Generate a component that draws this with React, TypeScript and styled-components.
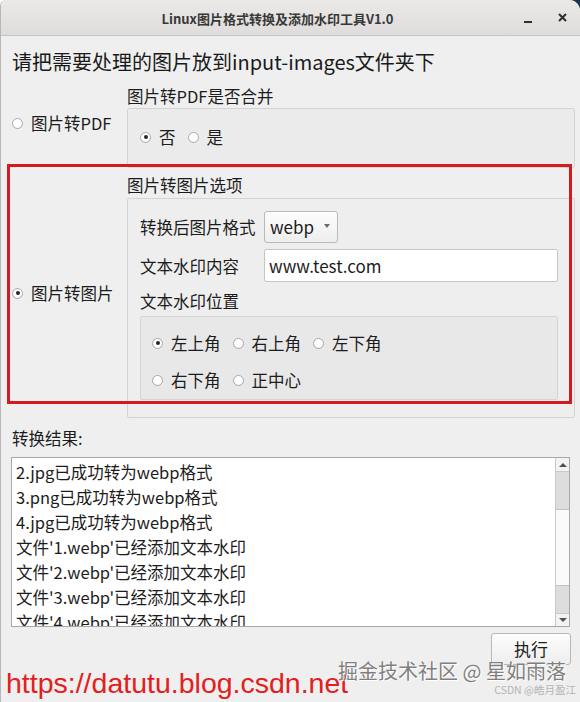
import React from "react";
import styled, { createGlobalStyle } from "styled-components";

const GlobalStyle = createGlobalStyle`
  html, body {
    margin: 0;
    padding: 0;
    background: #ffffff;
  }
  body {
    font-family: "Noto Sans CJK SC", "Noto Sans", sans-serif;
    color: #1c1c1c;
  }
  * {
    box-sizing: border-box;
  }
`;

const Page = styled.div`
  position: relative;
  width: 580px;
  height: 702px;
  overflow: hidden;
`;

const DesktopCorner = styled.div`
  position: absolute;
  top: 0;
  right: 0;
  width: 14px;
  height: 14px;
  background: #1d3552;
`;

const Window = styled.div`
  position: relative;
  width: 580px;
  height: 702px;
  background: #efefef;
  border-left: 1px solid #b7b7b7;
  border-top-left-radius: 6px;
  border-top-right-radius: 11px;
  overflow: hidden;
`;

const TitleBar = styled.div`
  height: 36px;
  display: grid;
  grid-template-columns: 1fr auto 1fr;
  align-items: center;
  background: linear-gradient(#ebe9e7, #dfdddb);
  border-bottom: 1px solid #c6c4c1;
`;

const Title = styled.div`
  grid-column: 2;
  margin-right: 26px;
  font-size: 13px;
  font-weight: 700;
  color: #383838;
  padding-top: 1px;
`;

const Controls = styled.div`
  justify-self: end;
  display: flex;
  align-items: center;
  gap: 26px;
  padding-right: 13px;
`;

const Minimize = styled.span`
  display: block;
  width: 8px;
  height: 2px;
  margin-top: 9px;
  background: #2f2f2f;
`;

const Body = styled.div`
  padding: 0 5px 0 11px;
`;

const Heading = styled.div`
  margin-top: 12px;
  font-size: 20px;
  line-height: 28px;
  color: #1a1a1a;
`;

const OptionRow = styled.div<{ $top: number }>`
  display: grid;
  grid-template-columns: 115px 1fr;
  margin-top: ${(p) => p.$top}px;
`;

const ModeCell = styled.div<{ $lift: number }>`
  display: flex;
  align-items: center;
  padding-bottom: ${(p) => p.$lift}px;
`;

const GroupLabel = styled.div<{ $top?: number }>`
  font-size: 16.5px;
  line-height: 24px;
  margin-top: ${(p) => p.$top ?? 0}px;
`;

const Frame = styled.div<{ $shade: string }>`
  border: 1px solid #d4d4d4;
  border-radius: 2px;
  background: ${(p) => p.$shade};
`;

const MergeFrame = styled(Frame)`
  height: 60px;
  display: flex;
  align-items: center;
  gap: 12px;
  padding: 0 0 2px 12px;
`;

const ImageFrame = styled(Frame)`
  padding: 12px 16px 17px 12px;
  margin-top: 1px;
`;

const FieldRow = styled.div<{ $top?: number }>`
  display: flex;
  align-items: center;
  margin-top: ${(p) => p.$top ?? 0}px;
`;

const FieldLabel = styled.div`
  width: 124px;
  font-size: 16.5px;
  line-height: 24px;
`;

const Select = styled.div`
  width: 74px;
  height: 32px;
  display: flex;
  align-items: center;
  justify-content: space-between;
  padding: 0 7px 1px 5px;
  border: 1px solid #b9b9b9;
  border-radius: 3px;
  background: linear-gradient(#fdfdfd, #eeeeee);
  font-size: 17px;
`;

const Caret = styled.span`
  width: 0;
  height: 0;
  border-left: 3.5px solid transparent;
  border-right: 3.5px solid transparent;
  border-top: 4px solid #6a6a6a;
  margin-bottom: 2px;
`;

const Entry = styled.div`
  flex: 1;
  height: 33px;
  display: flex;
  align-items: center;
  padding: 0 0 1px 4px;
  background: #ffffff;
  border: 1px solid #c6c6c6;
  border-radius: 2px;
  font-size: 17px;
`;

const PositionFrame = styled(Frame)`
  margin-top: 3px;
  padding: 14px 10px 7px 11px;
  display: flex;
  flex-direction: column;
  gap: 13px;
`;

const RadioLine = styled.div`
  display: flex;
  gap: 12px;
`;

const RadioItem = styled.label`
  display: flex;
  align-items: center;
  gap: 8px;
  font-size: 16.5px;
  line-height: 24px;
  white-space: nowrap;
`;

const RadioDot = styled.span<{ $on?: boolean }>`
  width: 11px;
  height: 11px;
  border-radius: 50%;
  border: 1px solid #a9a9a9;
  background: radial-gradient(circle at 50% 40%, #ffffff 55%, #ededed);
  display: flex;
  align-items: center;
  justify-content: center;
  flex: none;
  &::after {
    content: "";
    width: 4px;
    height: 4px;
    border-radius: 50%;
    background: #262626;
    display: ${(p) => (p.$on ? "block" : "none")};
  }
`;

const ResultLabel = styled.div`
  margin-top: 8px;
  font-size: 16.5px;
  line-height: 24px;
`;

const ListBox = styled.div`
  margin: 7px 5px 0 -1px;
  height: 170px;
  display: grid;
  grid-template-columns: 1fr 14px;
  background: #ffffff;
  border: 1px solid #a8a8a8;
`;

const Lines = styled.div`
  overflow: hidden;
  padding: 2px 0 0 4px;
  font-size: 16.5px;
  line-height: 25px;
  white-space: nowrap;
`;

const ScrollBar = styled.div`
  display: grid;
  grid-template-rows: 14px 37px 77px 27px 13px;
  border-left: 1px solid #c9c9c9;
  background: #dcdcdc;
`;

const ArrowCell = styled.div<{ $down?: boolean }>`
  display: flex;
  align-items: center;
  justify-content: center;
  background: #f3f3f3;
  border-${(p) => (p.$down ? "top" : "bottom")}: 1px solid #c9c9c9;
  &::after {
    content: "";
    border-left: 4px solid transparent;
    border-right: 4px solid transparent;
    ${(p) => (p.$down ? "border-top" : "border-bottom")}: 4px solid #505050;
  }
`;

const Slider = styled.div`
  background: #fafafa;
  border-top: 1px solid #c2c2c2;
  border-bottom: 1px solid #c2c2c2;
`;

const Trough = styled.div`
  background: #dddddd;
`;

const ButtonRow = styled.div`
  display: flex;
  justify-content: flex-end;
  margin: 6px 4px 0 0;
`;

const Button = styled.button`
  width: 80px;
  height: 32px;
  border: 1px solid #b7b7b7;
  border-radius: 3px;
  background: linear-gradient(#fdfdfd, #eeeeee);
  font-family: inherit;
  font-size: 17px;
  color: #1c1c1c;
  padding: 0 0 2px;
`;

const UrlMark = styled.div`
  position: absolute;
  left: 5px;
  top: 669px;
  font-family: "Liberation Sans", Arial, sans-serif;
  font-size: 28.5px;
  line-height: 28px;
  color: #e2211c;
  white-space: nowrap;
`;

const SiteMark = styled.div`
  position: absolute;
  right: 14px;
  top: 657px;
  font-size: 20px;
  line-height: 28px;
  color: #7f7f7f;
  white-space: nowrap;
  text-shadow: 0 0 1px #fff, 1px 1px 0 #fff;
`;

const AuthorMark = styled.div`
  position: absolute;
  right: 4px;
  top: 683px;
  font-size: 10.5px;
  line-height: 14px;
  color: #b4b4b4;
  white-space: nowrap;
`;

const Highlight = styled.div`
  position: absolute;
  left: 6px;
  top: 164px;
  width: 565px;
  height: 240px;
  border: 3px solid #d21a1f;
  pointer-events: none;
`;

const Radio = ({ on, children }: { on?: boolean; children: React.ReactNode }) => (
  <RadioItem>
    <RadioDot $on={on} />
    {children}
  </RadioItem>
);

const results = [
  "2.jpg已成功转为webp格式",
  "3.png已成功转为webp格式",
  "4.jpg已成功转为webp格式",
  "文件'1.webp'已经添加文本水印",
  "文件'2.webp'已经添加文本水印",
  "文件'3.webp'已经添加文本水印",
  "文件'4.webp'已经添加文本水印",
];

export default function App() {
  return (
    <Page>
      <GlobalStyle />
      <DesktopCorner />
      <Window>
        <TitleBar>
          <Title>Linux图片格式转换及添加水印工具V1.0</Title>
          <Controls>
            <Minimize />
            <svg width="9" height="9" viewBox="0 0 9 9">
              <path d="M1 1L8 8M8 1L1 8" stroke="#2f2f2f" strokeWidth="2" />
            </svg>
          </Controls>
        </TitleBar>
        <Body>
          <Heading>请把需要处理的图片放到input-images文件夹下</Heading>

          <OptionRow $top={8}>
            <ModeCell $lift={6}>
              <Radio>图片转PDF</Radio>
            </ModeCell>
            <div>
              <GroupLabel>图片转PDF是否合并</GroupLabel>
              <MergeFrame $shade="#ebebeb">
                <Radio on>否</Radio>
                <Radio>是</Radio>
              </MergeFrame>
            </div>
          </OptionRow>

          <OptionRow $top={0}>
            <ModeCell $lift={0}>
              <Radio on>图片转图片</Radio>
            </ModeCell>
            <div>
              <GroupLabel $top={5}>图片转图片选项</GroupLabel>
              <ImageFrame $shade="#eeeeee">
                <FieldRow>
                  <FieldLabel>转换后图片格式</FieldLabel>
                  <Select>
                    webp
                    <Caret />
                  </Select>
                </FieldRow>
                <FieldRow $top={6}>
                  <FieldLabel>文本水印内容</FieldLabel>
                  <Entry>www.test.com</Entry>
                </FieldRow>
                <GroupLabel $top={7}>文本水印位置</GroupLabel>
                <PositionFrame $shade="#e8e8e8">
                  <RadioLine>
                    <Radio on>左上角</Radio>
                    <Radio>右上角</Radio>
                    <Radio>左下角</Radio>
                  </RadioLine>
                  <RadioLine>
                    <Radio>右下角</Radio>
                    <Radio>正中心</Radio>
                  </RadioLine>
                </PositionFrame>
              </ImageFrame>
            </div>
          </OptionRow>

          <ResultLabel>转换结果:</ResultLabel>
          <ListBox>
            <Lines>
              {results.map((line) => (
                <div key={line}>{line}</div>
              ))}
            </Lines>
            <ScrollBar>
              <ArrowCell />
              <Trough />
              <Slider />
              <Trough />
              <ArrowCell $down />
            </ScrollBar>
          </ListBox>
          <ButtonRow>
            <Button>执行</Button>
          </ButtonRow>
        </Body>
        <Highlight />
        <UrlMark>https://datutu.blog.csdn.net</UrlMark>
        <SiteMark>掘金技术社区 @ 星如雨落</SiteMark>
        <AuthorMark>CSDN @皓月盈江</AuthorMark>
      </Window>
    </Page>
  );
}
